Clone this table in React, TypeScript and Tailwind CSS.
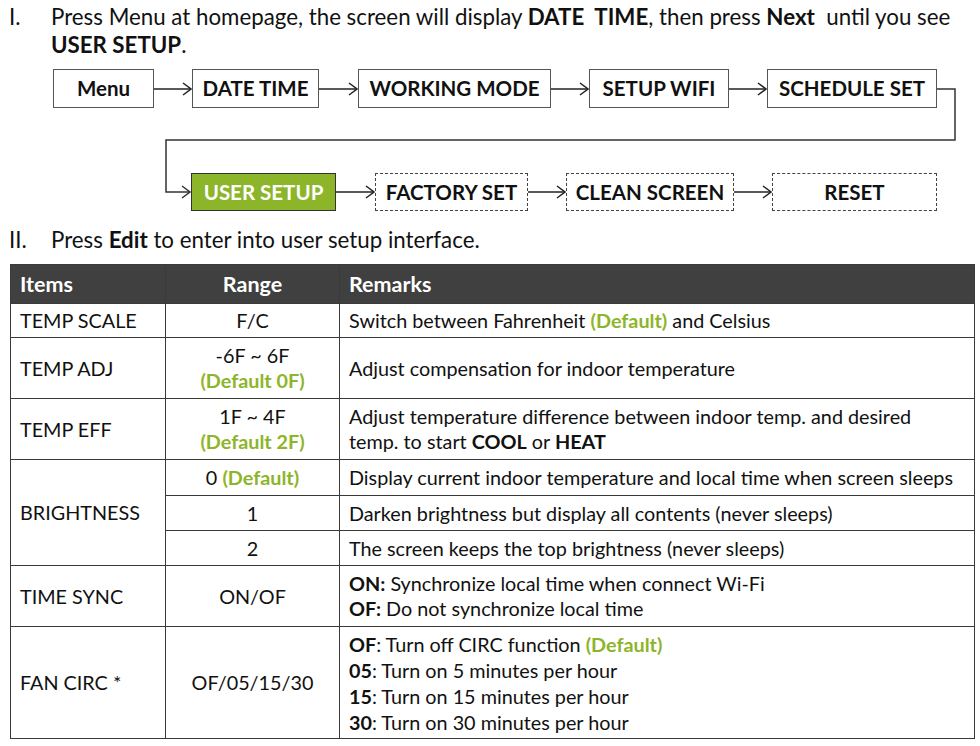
import React from "react";

const green = "text-[#8db52a]";

function Arrow({ w }: { w: number }) {
	return (
		<svg width={w} height="14" viewBox={`0 0 ${w} 14`} className="shrink-0">
			<line x1="0" y1="7" x2={w - 1} y2="7" stroke="#222" strokeWidth="1.5" />
			<polyline points={`${w - 9},1 ${w - 1},7 ${w - 9},13`} fill="none" stroke="#222" strokeWidth="1.5" />
		</svg>
	);
}

function Box({ label, w, dashed, active }: { label: string; w: number; dashed?: boolean; active?: boolean }) {
	const cls = active
		? "bg-[#8db52a] text-white border-[#333] border-solid"
		: dashed
			? "border-dashed border-[#444] text-[#111]"
			: "border-solid border-[#555] text-[#111]";
	return (
		<div
			className={`h-full flex items-center justify-center border font-bold text-[20.5px] ${cls}`}
			style={{ width: w }}
		>
			{label}
		</div>
	);
}

const cell = "border-[1.5px] border-[#3a3a3a] px-[9px] align-middle";

export default function App() {
	return (
		<div className="w-[980px] h-[746px] bg-white text-[#111] font-['Lato','Open_Sans',sans-serif] overflow-hidden relative">
			<div className="flex pt-[3px] text-[22.3px] leading-[28px]">
				<span className="w-[51px] pl-[9px] shrink-0">I.</span>
				<p>
					Press Menu at homepage, the screen will display <b>DATE&nbsp;&nbsp;TIME</b>, then press <b>Next</b>&nbsp; until you see
					<br />
					<b>USER SETUP</b>.
				</p>
			</div>

			{/* flowchart */}
			<div className="relative mt-[10px] h-[142px]">
				<svg className="absolute left-0 top-0" width="980" height="142">
					<polyline
						points="937,20 955,20 955,71 166,71 166,123 190,123"
						fill="none"
						stroke="#333"
						strokeWidth="1.5"
					/>
					<polyline points="182,117 190,123 182,129" fill="none" stroke="#333" strokeWidth="1.5" />
				</svg>
				<div className="flex items-center h-[39px] pl-[53px]">
					<Box label="Menu" w={101} />
					<Arrow w={38} />
					<Box label="DATE TIME" w={127} />
					<Arrow w={39} />
					<Box label="WORKING MODE" w={193} />
					<Arrow w={38} />
					<Box label="SETUP WIFI" w={140} />
					<Arrow w={38} />
					<Box label="SCHEDULE SET" w={170} />
				</div>
				<div className="flex items-center h-[38px] pl-[191px] mt-[65px]">
					<Box label="USER SETUP" w={145} active />
					<Arrow w={39} />
					<Box label="FACTORY SET" w={153} dashed />
					<Arrow w={38} />
					<Box label="CLEAN SCREEN" w={168} dashed />
					<Arrow w={38} />
					<Box label="RESET" w={165} dashed />
				</div>
			</div>

			<div className="flex text-[22.3px] leading-[28px] mt-[15px]">
				<span className="w-[51px] pl-[9px] shrink-0">II.</span>
				<p>
					Press <b>Edit</b> to enter into user setup interface.
				</p>
			</div>

			<table className="ml-[10px] mt-[10px] w-[965px] border-collapse text-[19.8px] leading-[25px] table-fixed">
				<colgroup>
					<col className="w-[155px]" />
					<col className="w-[174px]" />
					<col />
				</colgroup>
				<thead>
					<tr className="h-[39px] bg-[#404040] text-white font-bold text-[21.5px]">
						<th className={`${cell} text-left`}>Items</th>
						<th className={`${cell} text-center`}>Range</th>
						<th className={`${cell} text-left`}>Remarks</th>
					</tr>
				</thead>
				<tbody>
					<tr className="h-[34px]">
						<td className={cell}>TEMP SCALE</td>
						<td className={`${cell} text-center`}>F/C</td>
						<td className={cell}>
							Switch between Fahrenheit <b className={green}>(Default)</b> and Celsius
						</td>
					</tr>
					<tr className="h-[61px]">
						<td className={cell}>TEMP ADJ</td>
						<td className={`${cell} text-center`}>
							-6F ~ 6F
							<br />
							<b className={green}>(Default 0F)</b>
						</td>
						<td className={cell}>Adjust compensation for indoor temperature</td>
					</tr>
					<tr className="h-[61px]">
						<td className={cell}>TEMP EFF</td>
						<td className={`${cell} text-center`}>
							1F ~ 4F
							<br />
							<b className={green}>(Default 2F)</b>
						</td>
						<td className={cell}>
							Adjust temperature difference between indoor temp. and desired
							<br />
							temp. to start <b>COOL</b> or <b>HEAT</b>
						</td>
					</tr>
					<tr className="h-[36px]">
						<td className={cell} rowSpan={3}>
							BRIGHTNESS
						</td>
						<td className={`${cell} text-center`}>
							0 <b className={green}>(Default)</b>
						</td>
						<td className={cell}>Display current indoor temperature and local time when screen sleeps</td>
					</tr>
					<tr className="h-[35px]">
						<td className={`${cell} text-center`}>1</td>
						<td className={cell}>Darken brightness but display all contents (never sleeps)</td>
					</tr>
					<tr className="h-[35px]">
						<td className={`${cell} text-center`}>2</td>
						<td className={cell}>The screen keeps the top brightness (never sleeps)</td>
					</tr>
					<tr className="h-[61px]">
						<td className={cell}>TIME SYNC</td>
						<td className={`${cell} text-center`}>ON/OF</td>
						<td className={cell}>
							<b>ON:</b> Synchronize local time when connect Wi-Fi
							<br />
							<b>OF:</b> Do not synchronize local time
						</td>
					</tr>
					<tr className="h-[112px]">
						<td className={cell}>FAN CIRC *</td>
						<td className={`${cell} text-center`}>OF/05/15/30</td>
						<td className={`${cell} leading-[26px]`}>
							<b>OF</b>: Turn off CIRC function <b className={green}>(Default)</b>
							<br />
							<b>05</b>: Turn on 5 minutes per hour
							<br />
							<b>15</b>: Turn on 15 minutes per hour
							<br />
							<b>30</b>: Turn on 30 minutes per hour
						</td>
					</tr>
				</tbody>
			</table>
		</div>
	);
}
